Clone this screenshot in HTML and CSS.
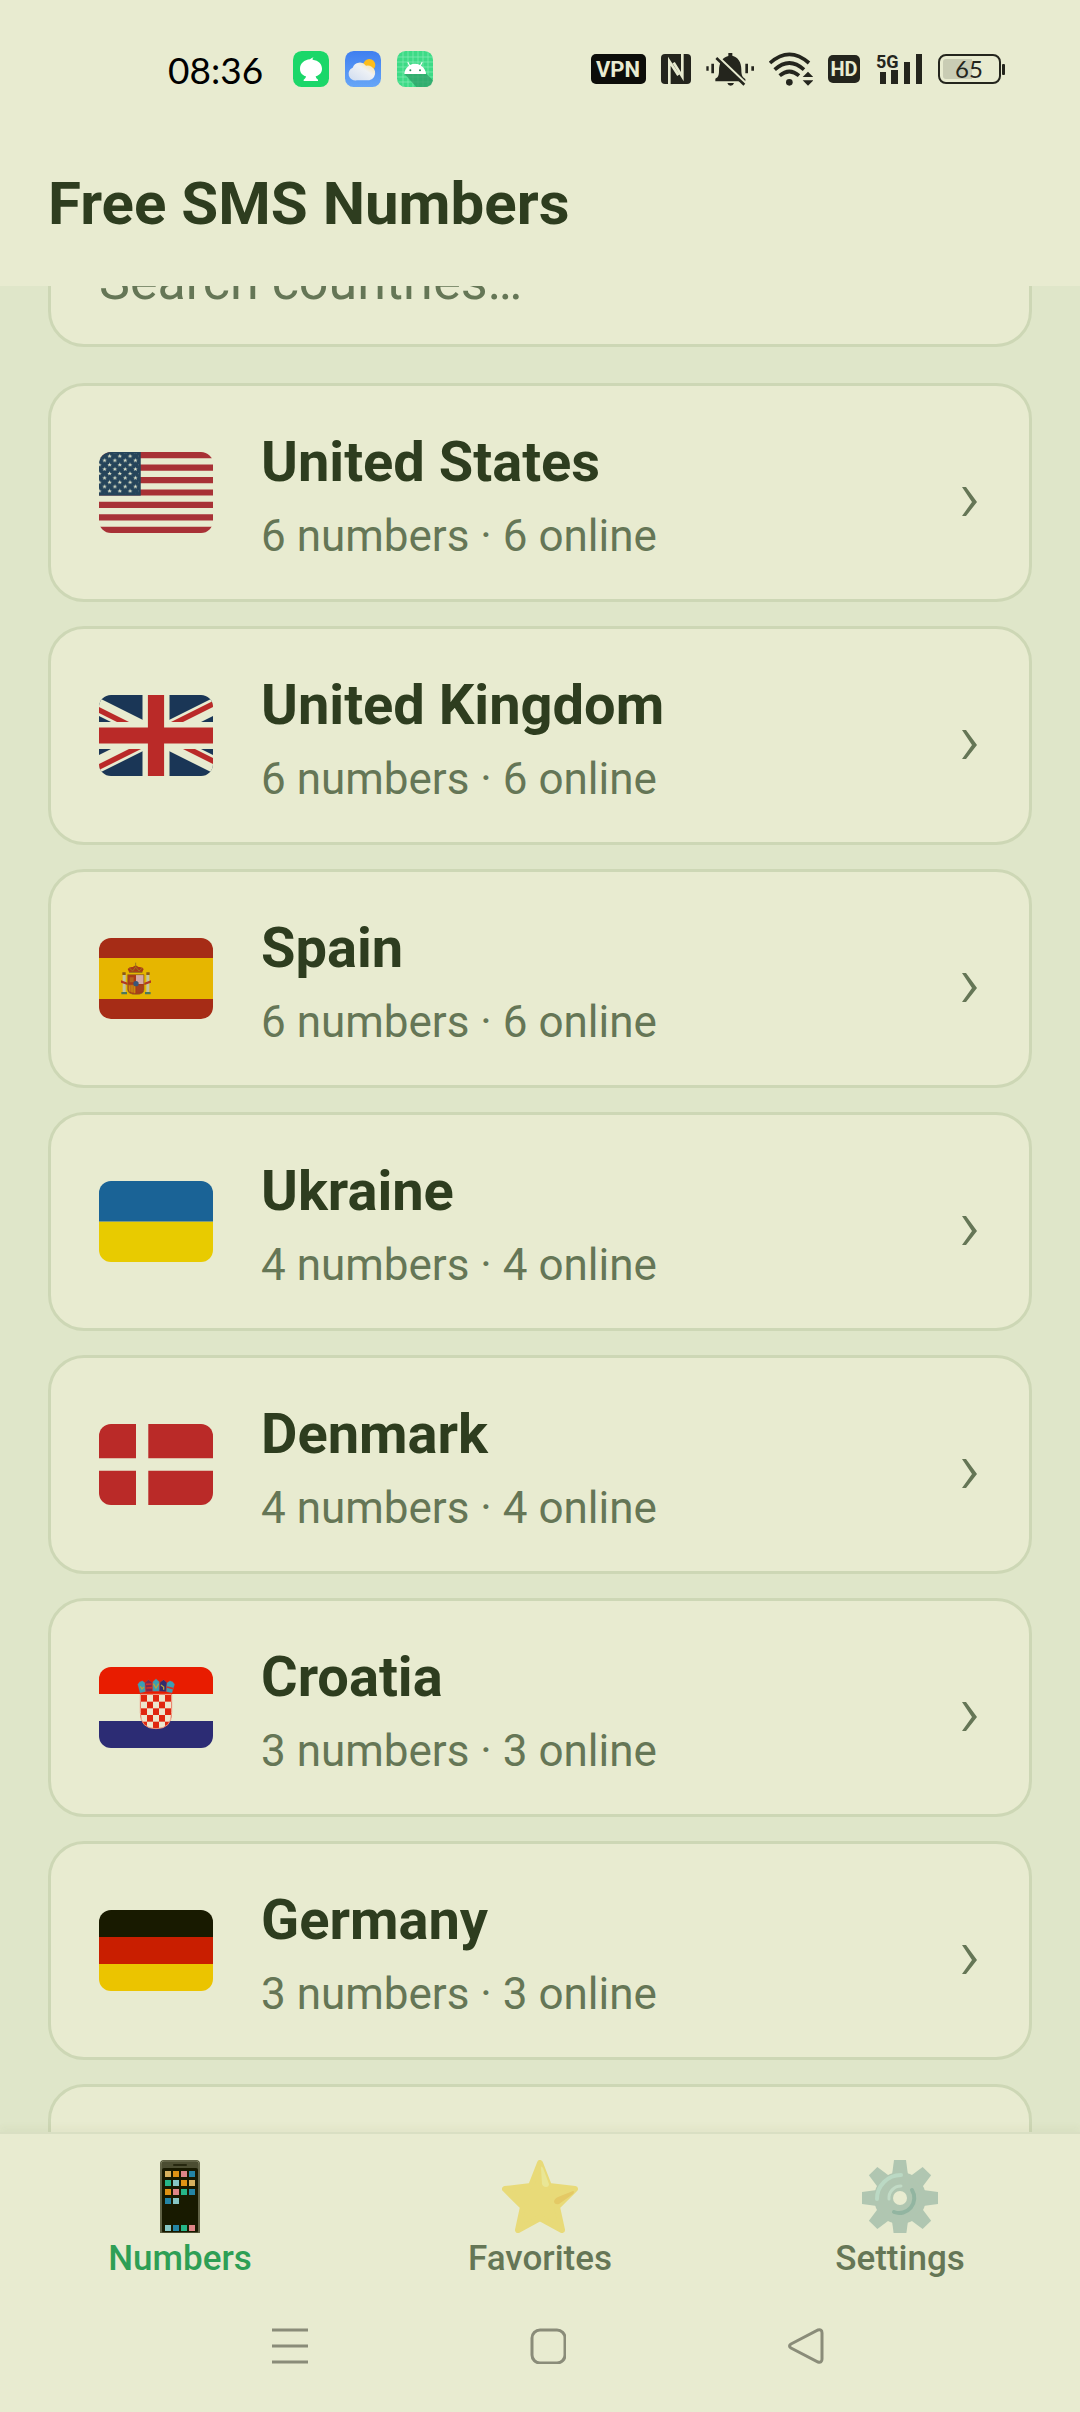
FILE: index.html
```html
<!DOCTYPE html>
<html lang="en">
<head>
  <meta charset="UTF-8">
  <meta name="viewport" content="width=device-width, initial-scale=1">
  <title>Free SMS Numbers</title>
  <link rel="stylesheet" href="styles.css">
</head>
<body>

<!-- Status bar -->
<div class="status-bar">
  <div class="status-left">
    <span class="clock">08:36</span>
    <svg width="36" height="36" viewBox="0 0 108 108">
      <rect width="108" height="108" rx="26" fill="#1bd769"/>
      <path d="M66 19c-6 1-8 3-7 7 18 2 28 13 28 27 0 12-8 20-19 23 1 6 4 8 7 10v4H32v-4c4-2 6-5 7-10-11-3-18-11-18-23 0-16 13-26 30-28 4-4 9-6 15-6z" fill="#fff"/>
    </svg>
    <svg width="36" height="36" viewBox="0 0 108 108">
      <defs>
        <linearGradient id="sky" x1="0" y1="0" x2="0" y2="1"><stop offset="0" stop-color="#3f7ff0"/><stop offset="1" stop-color="#66a6f7"/></linearGradient>
        <linearGradient id="cloud" x1="1" y1="0" x2="0" y2="1"><stop offset="0" stop-color="#ffe08a"/><stop offset=".4" stop-color="#eef1f5"/><stop offset="1" stop-color="#cfdcf0"/></linearGradient>
      </defs>
      <rect width="108" height="108" rx="26" fill="url(#sky)"/>
      <circle cx="73" cy="42" r="18" fill="#fdbd1c"/>
      <path d="M35 88a20 20 0 0 1-12-38 23 23 0 0 1 40-6 22 22 0 0 1 10 44z" fill="url(#cloud)"/>
    </svg>
    <svg width="36" height="36" viewBox="0 0 108 108">
      <rect width="108" height="108" rx="26" fill="#3ddb86"/>
      <path d="M18 2v104M33 0v108M48 0v108M63 0v108M78 0v108M93 4v100M2 18h104M0 33h108M0 48h108M0 63h108M0 78h108M4 93h100" stroke="#8debb8" stroke-width="2"/>
      <path d="M22 68h66l20 20-6 14-12 6H58z" fill="#2c9f66" opacity=".75"/>
      <path d="M22 69a33 33 0 0 1 14-25l-5-10 3-1 5 9a36 36 0 0 1 30 0l5-9 3 1-5 10a33 33 0 0 1 15 25z" fill="#fff"/>
      <circle cx="40" cy="58" r="3" fill="#2a8d5c"/><circle cx="69" cy="58" r="3" fill="#2a8d5c"/>
    </svg>
  </div>
  <div class="status-right">
    <svg width="55" height="30" viewBox="0 0 55 30">
      <rect width="55" height="30" rx="5" fill="#0c0d09"/>
      <text x="27" y="23" class="badge-text">VPN</text>
    </svg>
    <svg width="30" height="30" viewBox="0 0 90 90">
      <rect width="90" height="90" rx="12" fill="#24251d"/>
      <path d="M25 92V22L52 64M64-2V68L38 26" fill="none" stroke="#e8ebd0" stroke-width="8"/>
    </svg>
    <svg width="48" height="34" viewBox="0 0 144 102">
      <g fill="#24251d">
        <path d="M28 88V80c9-5 11-11 11-24 0-24 10-40 28-44V3h12v8c17 4 27 19 27 42 0 16 3 22 12 28v7z"/>
        <path d="M64 93h20q-2 8-10 8t-10-8z"/>
        <path d="M1 43h7v13H1zM16 35h8v29h-8zM118 35h8v29h-8zM136 43h8v13h-8z"/>
      </g>
      <path d="M28 8l94 90" stroke="#e8ebd0" stroke-width="10"/>
      <path d="M31 18l84 80" stroke="#24251d" stroke-width="8"/>
    </svg>
    <svg width="44" height="34" viewBox="0 0 132 102">
      <g fill="none" stroke="#24251d" stroke-width="11">
        <path d="M3 33Q61-19 120 33"/><path d="M17 53Q61 13 105 53"/><path d="M32 71Q61 46 90 71"/>
      </g>
      <circle cx="61" cy="91" r="10" fill="#24251d"/>
      <path d="M101 75l16-16 16 16zM101 85h32l-16 16z" fill="#24251d"/>
    </svg>
    <svg width="32" height="28" viewBox="0 0 32 28">
      <rect width="32" height="28" rx="5" fill="#24251d"/>
      <text x="16" y="21" class="badge-text small">HD</text>
    </svg>
    <svg width="48" height="38" viewBox="0 0 48 38">
      <text x="1" y="18" class="net-text">5G</text>
      <path d="M5 22h6v12H5zM16 20h7v14h-7zM29 12h6v22h-6zM41 4h6v30h-6z" fill="#24251d"/>
    </svg>
    <svg width="67" height="30" viewBox="0 0 67 30">
      <path d="M8 5H34V25H8a3 3 0 0 1-3-3V8a3 3 0 0 1 3-3z" fill="#c9ccb4"/>
      <rect x="1" y="1" width="61" height="28" rx="7" fill="none" stroke="#24251d" stroke-width="2"/>
      <rect x="64" y="10" width="3" height="11" rx="1" fill="#24251d"/>
      <text x="31" y="24" class="battery-text">65</text>
    </svg>
  </div>
</div>

<header class="app-header">
  <h1>Free SMS Numbers</h1>
</header>

<!-- Country list -->
<main class="content">
  <div class="scroll">
    <input class="search" type="search" placeholder="Search countries…" aria-label="Search countries">
    <ul class="countries">
      <li>
        <a class="card" href="#us">
          <svg class="flag" viewBox="0 0 494 260" preserveAspectRatio="xMidYMid slice">
            <defs>
              <pattern id="stars" x="15" y="5" width="33" height="28" patternUnits="userSpaceOnUse">
                <path id="st" d="M17 1l2 5h5l-4 3 2 5-5-3-5 3 2-5-4-3h5z" fill="#e8ebd0"/>
                <use href="#st" x="-16" y="14"/><use href="#st" x="17" y="14"/>
              </pattern>
            </defs>
            <rect width="494" height="260" fill="#e8ebd0"/>
            <path d="M0 10h494M0 50h494M0 90h494M0 130h494M0 170h494M0 210h494M0 250h494" stroke="#a83136" stroke-width="20"/>
            <rect width="198" height="140" fill="#25445a"/>
            <rect y="5" width="192" height="127" fill="url(#stars)"/>
          </svg>
          <span class="info"><span class="name">United States</span><span class="meta">6 numbers · 6 online</span></span>
          <svg class="chevron" width="19" height="47" viewBox="0 0 19 47"><path d="M0 18h4l11 15-11 14H0l10-14z"/></svg>
        </a>
      </li>
      <li>
        <a class="card" href="#gb">
          <svg class="flag" viewBox="0 0 60 30" preserveAspectRatio="xMidYMid slice">
            <clipPath id="gb"><path d="M30 15h30v15zv15H0zH0V0zV0h30z"/></clipPath>
            <rect width="60" height="30" fill="#1a3656"/>
            <path d="M0 0l60 30M60 0L0 30" stroke="#e8ebd0" stroke-width="6"/>
            <path d="M0 0l60 30M60 0L0 30" clip-path="url(#gb)" stroke="#ba2a28" stroke-width="4"/>
            <path d="M30 0v30M0 15h60" stroke="#e8ebd0" stroke-width="10"/>
            <path d="M30 0v30M0 15h60" stroke="#ba2a28" stroke-width="6"/>
          </svg>
          <span class="info"><span class="name">United Kingdom</span><span class="meta">6 numbers · 6 online</span></span>
          <svg class="chevron" width="19" height="47" viewBox="0 0 19 47"><path d="M0 18h4l11 15-11 14H0l10-14z"/></svg>
        </a>
      </li>
      <li>
        <a class="card" href="#es">
          <svg class="flag" viewBox="0 0 342 243" preserveAspectRatio="xMidYMid slice">
            <rect width="342" height="243" fill="#a62c16"/>
            <rect y="60" width="342" height="123" fill="#e6b600"/>
            <path d="M71 110h9v52h-9zM142 110h9v52h-9z" fill="#c3c3a0"/>
            <path d="M70 103h10v8H70zM142 103h10v8h-10z" fill="#8c5a18"/>
            <path d="M67 162h17v7H67zM138 162h17v7h-17z" fill="#4c7a5a"/>
            <path d="M66 127l20 7v7l-20-7zM156 127l-20 7v7l20-7z" fill="#b23a20"/>
            <path d="M86 110h49v45q0 14-24 14t-25-14z" fill="#a93a18"/>
            <path d="M111 111h23v27h-23z" fill="#d5a9a4"/>
            <path d="M88 140h22v25q-22-1-22-12z" fill="#bd6a18"/>
            <path d="M92 143v18M99 142v22M106 142v24" stroke="#d8a800" stroke-width="2"/>
            <path d="M92 118h12v15H92z" fill="#b5651b"/>
            <path d="M113 142h19v18l-19 6z" fill="#a5421e"/>
            <circle cx="111" cy="137" r="8" fill="#3b5678"/>
            <path d="M91 104l-5-11q5-7 15-6l9-5 9 5q10-1 15 6l-5 11z" fill="#a93a18"/>
            <path d="M110 74v12M90 103h40M91 90l10 9 9-12 10 12 10-9" fill="none" stroke="#9b7c18" stroke-width="3"/>
            <path d="M86 110h49v45q0 14-24 14t-25-14z" fill="none" stroke="#8f6b20" stroke-width="2"/>
          </svg>
          <span class="info"><span class="name">Spain</span><span class="meta">6 numbers · 6 online</span></span>
          <svg class="chevron" width="19" height="47" viewBox="0 0 19 47"><path d="M0 18h4l11 15-11 14H0l10-14z"/></svg>
        </a>
      </li>
      <li>
        <a class="card" href="#ua">
          <svg class="flag" viewBox="0 0 6 4" preserveAspectRatio="xMidYMid slice">
            <rect y="2" width="6" height="2" fill="#e8cb00"/>
            <rect width="6" height="2" fill="#1a6396"/>
          </svg>
          <span class="info"><span class="name">Ukraine</span><span class="meta">4 numbers · 4 online</span></span>
          <svg class="chevron" width="19" height="47" viewBox="0 0 19 47"><path d="M0 18h4l11 15-11 14H0l10-14z"/></svg>
        </a>
      </li>
      <li>
        <a class="card" href="#dk">
          <svg class="flag" viewBox="0 0 37 28" preserveAspectRatio="xMidYMid slice">
            <rect width="37" height="28" fill="#ba2a28"/>
            <path d="M14 0v28M0 14h37" stroke="#e8ebd0" stroke-width="4"/>
          </svg>
          <span class="info"><span class="name">Denmark</span><span class="meta">4 numbers · 4 online</span></span>
          <svg class="chevron" width="19" height="47" viewBox="0 0 19 47"><path d="M0 18h4l11 15-11 14H0l10-14z"/></svg>
        </a>
      </li>
      <li>
        <a class="card" href="#hr">
          <svg class="flag" viewBox="0 0 342 243" preserveAspectRatio="xMidYMid slice">
            <defs>
              <pattern id="checks" x="126" y="84" width="36" height="40" patternUnits="userSpaceOnUse">
                <rect width="36" height="40" fill="#ece6cd"/>
                <path d="M0 0h18v20H0zM18 20h18v20H18z" fill="#e0260f"/>
              </pattern>
            </defs>
            <rect y="81" width="342" height="81" fill="#e8ebd0"/>
            <rect width="342" height="81" fill="#e81c00"/>
            <rect y="162" width="342" height="81" fill="#2c2c74"/>
            <path d="M124 82h94v55q0 48-47 48t-47-48z" fill="url(#checks)" stroke="#ec8f78" stroke-width="3"/>
            <g stroke="#c6453c" stroke-width="1">
              <path d="M123 78l-7-26 6-8 8-3 8 6 2 27z" fill="#3a9fb5"/>
              <path d="M141 74l-3-27 10-9 11 8 2 27z" fill="#7d2850"/>
              <path d="M161 73V44l10-9 10 9v29z" fill="#3a9fb5"/>
              <path d="M181 73l2-27 11-8 10 9-3 27z" fill="#312c6c"/>
              <path d="M202 74l2-27 9-6 8 3 6 8-8 26z" fill="#3a9fb5"/>
            </g>
            <path d="M124 58l5 8 6-6M186 54l8 6v8M163 50l8 13 8-13" fill="none" stroke="#b6a43c" stroke-width="4"/>
            <path d="M141 52l17-1M142 63l17-1M204 60l18 5" stroke="#d33125" stroke-width="5"/>
          </svg>
          <span class="info"><span class="name">Croatia</span><span class="meta">3 numbers · 3 online</span></span>
          <svg class="chevron" width="19" height="47" viewBox="0 0 19 47"><path d="M0 18h4l11 15-11 14H0l10-14z"/></svg>
        </a>
      </li>
      <li>
        <a class="card" href="#de">
          <svg class="flag" viewBox="0 0 5 3" preserveAspectRatio="xMidYMid slice">
            <rect width="5" height="1" fill="#181a00"/>
            <rect y="1" width="5" height="1" fill="#c91e00"/>
            <rect y="2" width="5" height="1" fill="#ebc400"/>
          </svg>
          <span class="info"><span class="name">Germany</span><span class="meta">3 numbers · 3 online</span></span>
          <svg class="chevron" width="19" height="47" viewBox="0 0 19 47"><path d="M0 18h4l11 15-11 14H0l10-14z"/></svg>
        </a>
      </li>
      <li><div class="card"></div></li>
    </ul>
  </div>
</main>

<!-- Tabs -->
<nav class="tabs">
  <a class="tab active" href="#numbers">
    <svg width="40" height="73" viewBox="0 0 40 73">
      <path d="M0 76V4q0-4 4-4h32q4 0 4 4v72z" fill="#4b4d31"/>
      <path d="M1 73V4q0-3 3-3h32q3 0 3 3v69" fill="none" stroke="#77795a" stroke-width="1"/>
      <rect x="13" y="4" width="14" height="2" rx="1" fill="#25270f"/>
      <path d="M2 71V10q0-2 2-2h32q2 0 2 2v61q0 1-1 1H3q-1 0-1-1z" fill="#181a00"/>
      <path d="M5 11h6v6H5zM29 20h6v6h-6z" fill="#d6b15e"/>
      <path d="M13 11h6v6h-6zM21 20h6v6h-6zM5 29h6v6H5z" fill="#df9314"/>
      <path d="M21 11h6v6h-6zM13 29h6v6h-6zM29 65h6v6h-6z" fill="#de8587"/>
      <path d="M29 11h6v6h-6zM29 29h6v6h-6zM5 38h6v6H5zM13 65h6v6h-6z" fill="#2485a5"/>
      <path d="M5 20h6v6H5zM21 29h6v6h-6zM21 65h6v6h-6z" fill="#26b587"/>
      <path d="M13 20h6v6h-6zM13 38h6v6h-6zM5 65h6v6H5z" fill="#87c6c4"/>
    </svg>
    <span>Numbers</span>
  </a>
  <a class="tab" href="#favorites">
    <svg width="76" height="73" viewBox="0 0 76 73">
      <path d="M38 3l9 23 26 3-18 18 5 23-22-12-22 12 5-23L3 29l26-3z" fill="#e8da78" stroke="#e8da78" stroke-width="6" stroke-linejoin="round"/>
      <path d="M39 8q0-3 2 0l6 16q0 3-3 3-3 0-4-3z" fill="#e9e695"/>
      <path d="M71 31q2 0 0 3L57 44q-4 1-5-2 0-3 4-5z" fill="#e4c965"/>
    </svg>
    <span>Favorites</span>
  </a>
  <a class="tab" href="#settings">
    <svg width="76" height="73" viewBox="0 0 76 73">
      <g fill="#b0c6b1">
        <circle cx="38" cy="38" r="26"/>
        <path id="tooth" d="M32 0h12l2 15H30z"/>
        <use href="#tooth" transform="rotate(45 38 38)"/>
        <use href="#tooth" transform="rotate(90 38 38)"/>
        <use href="#tooth" transform="rotate(135 38 38)"/>
        <use href="#tooth" transform="rotate(180 38 38)"/>
        <use href="#tooth" transform="rotate(225 38 38)"/>
        <use href="#tooth" transform="rotate(270 38 38)"/>
        <use href="#tooth" transform="rotate(315 38 38)"/>
      </g>
      <g fill="none" stroke-linecap="round">
        <path d="M15 39a24 24 0 0 1 24-24" stroke="#bbd9c4" stroke-width="4"/>
        <path d="M27 39a12 12 0 0 1 12-13" stroke="#c2dbc6" stroke-width="3"/>
        <path d="M50 30a15 15 0 0 1-18 22" stroke="#92b5a1" stroke-width="4"/>
      </g>
      <circle cx="38" cy="38" r="7" fill="#e8ebd0"/>
    </svg>
    <span>Settings</span>
  </a>
</nav>

<!-- System buttons -->
<div class="system-nav">
  <button aria-label="Recent apps">
    <svg width="36" height="36" viewBox="0 0 36 36"><path d="M0 2h36M0 18h36M0 34h36"/></svg>
  </button>
  <button aria-label="Home">
    <svg width="36" height="36" viewBox="0 0 36 36"><rect x="2" y="2" width="33" height="33" rx="8"/></svg>
  </button>
  <button aria-label="Back">
    <svg width="36" height="36" viewBox="0 0 36 36"><path d="M3 16L30 2q4-1 4 3v26q0 4-4 3L3 20q-3-2 0-4z"/></svg>
  </button>
</div>

</body>
</html>
```
FILE: styles.css
```css
* {
  box-sizing: border-box;
}
body {
  margin: 0;
  height: 100vh;
  display: flex;
  flex-direction: column;
  overflow: hidden;
  font-family: Roboto, "Noto Sans", sans-serif;
  background: #e8ebd0;
  color: #2e3d1f;
}
svg {
  display: block;
  flex: none;
}

/* status bar */
.status-bar {
  display: flex;
  justify-content: space-between;
  align-items: center;
  height: 138px;
  padding: 0 75px 0 168px;
}
.status-left,
.status-right {
  display: flex;
  align-items: center;
}
.status-left {
  gap: 16px;
}
.status-right {
  gap: 15px;
}
.clock {
  margin-right: 14px;
  font-family: Lato, sans-serif;
  font-size: 37px;
  color: #000;
}
.badge-text {
  font-size: 22px;
  font-weight: bold;
  fill: #e8ebd0;
  text-anchor: middle;
}
.badge-text.small {
  font-size: 20px;
}
.net-text {
  font-size: 18px;
  font-weight: bold;
  fill: #24251d;
}
.battery-text {
  font-family: Lato, sans-serif;
  font-size: 24px;
  fill: #24251d;
  text-anchor: middle;
}

/* header */
.app-header {
  height: 148px;
  padding: 30px 48px;
}
h1 {
  margin: 0;
  font-size: 60px;
  line-height: 72px;
  font-weight: bold;
}

/* country list */
.content {
  flex: 1;
  min-height: 0;
  overflow: hidden;
  padding: 0 48px;
  background: #dfe6c9;
}
.scroll {
  margin-top: -71px;
}
.search {
  display: block;
  width: 100%;
  height: 132px;
  margin-bottom: 36px;
  padding: 0 48px;
  border: 3px solid #cdd7b5;
  border-radius: 36px;
  background: #e8ebd0;
  font: inherit;
  font-size: 52px;
  color: inherit;
  outline: none;
  appearance: none;
}
.search::placeholder {
  color: #657656;
}
.countries {
  margin: 0;
  padding: 0;
  list-style: none;
  display: flex;
  flex-direction: column;
  gap: 24px;
}
.card {
  display: flex;
  align-items: center;
  gap: 48px;
  height: 219px;
  padding: 0 48px;
  border: 3px solid #cdd7b5;
  border-radius: 36px;
  background: #e8ebd0;
  color: inherit;
  text-decoration: none;
}
.flag {
  width: 114px;
  height: 81px;
  border-radius: 12px;
}
.info {
  flex: 1;
  display: flex;
  flex-direction: column;
  gap: 8px;
  padding-top: 6px;
}
.name {
  font-size: 56px;
  line-height: 72px;
  font-weight: bold;
}
.meta {
  font-size: 44px;
  line-height: 60px;
  color: #657656;
}
.chevron {
  fill: #657656;
}

/* tabs */
.tabs {
  display: flex;
  height: 160px;
  border-top: 2px solid #d9dfc3;
  box-shadow: 0 -6px 6px rgba(90, 90, 40, 0.03);
  z-index: 1;
}
.tab {
  flex: 1;
  display: flex;
  flex-direction: column;
  align-items: center;
  gap: 5px;
  padding-top: 26px;
  font-size: 35px;
  line-height: 42px;
  font-weight: 500;
  color: #657656;
  text-decoration: none;
}
.tab.active {
  color: #2e9f55;
}

/* system buttons */
.system-nav {
  display: flex;
  justify-content: center;
  align-items: flex-start;
  gap: 222px;
  height: 120px;
  padding: 36px 0 0 16px;
}
.system-nav button {
  padding: 0;
  border: none;
  background: none;
}
.system-nav svg {
  fill: none;
  stroke: #8a8c79;
  stroke-width: 3;
}
```
